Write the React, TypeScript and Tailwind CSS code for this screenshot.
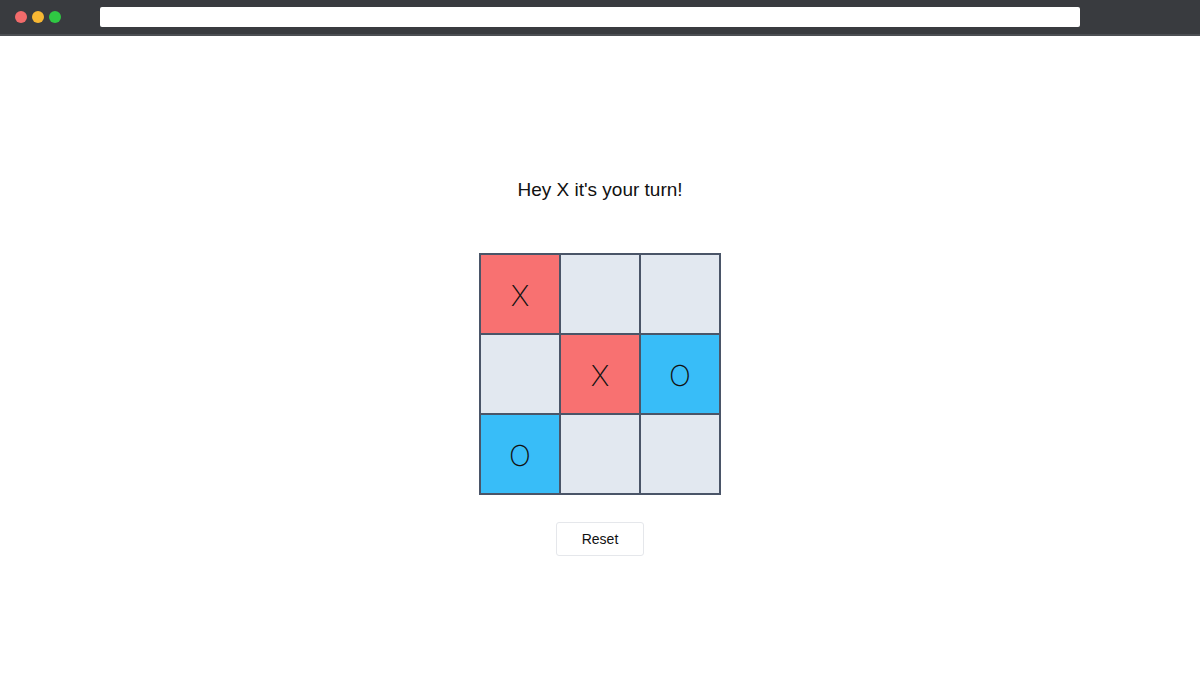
const board: (string | null)[] = ["X", null, null, null, "X", "O", "O", null, null];

function Cell({ value }: { value: string | null }) {
  const bg = value === "X" ? "bg-[#f87171]" : value === "O" ? "bg-[#38bdf8]" : "bg-[#e2e8f0]";
  return (
    <div className={`w-20 h-20 border border-[#4a5568] flex items-center justify-center ${bg}`}>
      <span className="text-[29px] font-extralight text-[#111] font-['Inter',sans-serif] leading-none pt-[2px]">{value}</span>
    </div>
  );
}

export default function App() {
  return (
    <div className="h-[694px] flex flex-col bg-white font-['Liberation_Sans',Arial,sans-serif]">
      <div className="h-9 shrink-0 bg-[#393b3f] border-b-2 border-[#4c4f53] flex items-center">
        <div className="flex items-center gap-[5px] pl-[15px] w-[100px]">
          <span className="w-3 h-3 rounded-full bg-[#f26b6b]" />
          <span className="w-3 h-3 rounded-full bg-[#f7b733]" />
          <span className="w-3 h-3 rounded-full bg-[#2fc843]" />
        </div>
        <div className="w-[980px] h-5 bg-white rounded-[2px]" />
      </div>

      <div className="flex-1 flex flex-col items-center justify-center">
        <h1 className="text-[19px] leading-7 text-[#111] pt-[2px]">Hey X it's your turn!</h1>
        <div className="mt-[49px] grid grid-cols-3 border border-[#4a5568]">
          {board.map((v, i) => (
            <Cell key={i} value={v} />
          ))}
        </div>
        <button className="mt-[27px] w-[88px] h-[34px] border border-[#e5e7eb] rounded-[3px] bg-white text-sm text-[#111]">
          Reset
        </button>
      </div>
    </div>
  );
}
